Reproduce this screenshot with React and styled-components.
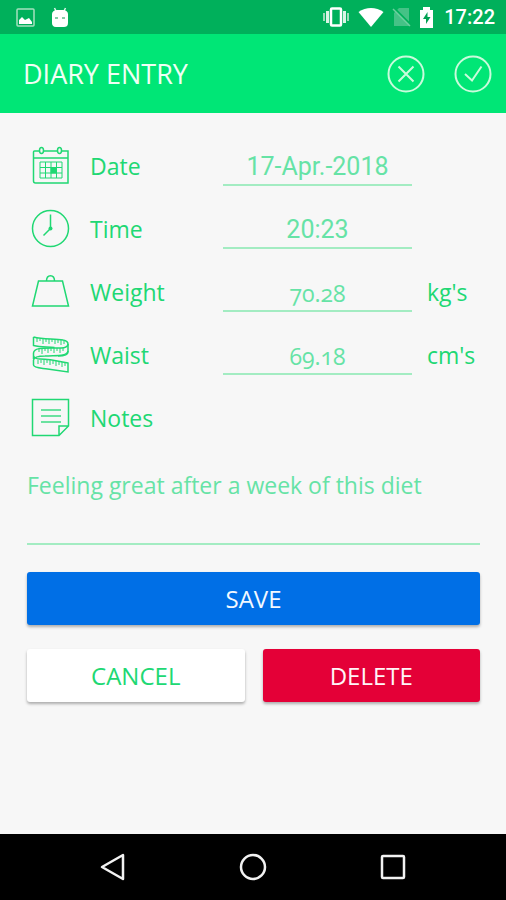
import React from "react";
import styled, { createGlobalStyle } from "styled-components";

const GREEN = "#20d873";
const SOFT_GREEN = "#66e3a6";
const LINE_GREEN = "#a3ecc2";

const GlobalStyle = createGlobalStyle`
  *, *::before, *::after { box-sizing: border-box; }
  body { margin: 0; background: #f7f7f7; }
  button, input, textarea { font: inherit; }
`;

const Screen = styled.div`
  min-height: 100vh;
  display: flex;
  flex-direction: column;
  background: #f7f7f7;
  color: ${GREEN};
  font-family: "Open Sans", "Noto Sans", sans-serif;
  font-size: 23px;
  line-height: 30px;
`;

const StatusBar = styled.div`
  height: 34px;
  padding: 0 11px 0 16px;
  display: flex;
  align-items: center;
  justify-content: space-between;
  background: #00b05b;
  color: #fff;
`;

const StatusGroup = styled.div`
  display: flex;
  align-items: center;
  gap: ${(p) => p.$gap}px;
`;

const Clock = styled.time`
  font-family: Roboto, sans-serif;
  font-size: 20px;
  font-weight: 500;
  line-height: 24px;
`;

const AppBar = styled.header`
  height: 79px;
  padding: 0 14px 0 23px;
  display: flex;
  align-items: center;
  justify-content: space-between;
  background: #00e676;
  color: #f0fff5;
`;

const Title = styled.h1`
  margin: 0;
  font-size: 27px;
  font-weight: 400;
  line-height: 36px;
`;

const Actions = styled.div`
  display: flex;
  gap: 29px;
`;

const IconButton = styled.button`
  display: flex;
  padding: 0;
  border: 0;
  background: none;
  color: #c9fbdc;
  cursor: pointer;
`;

const Form = styled.form`
  flex: 1;
  display: flex;
  flex-direction: column;
  padding: 21px 26px 24px 27px;
`;

const Row = styled.div`
  height: 63px;
  display: grid;
  grid-template-columns: 48px 118px minmax(0, 1fr) 53px;
  column-gap: 15px;
  align-items: center;
`;

const RowIcon = styled.span`
  display: flex;
  padding-left: 4px;
`;

const Label = styled.label`
  white-space: nowrap;
`;

const Field = styled.input`
  width: 100%;
  height: 41px;
  padding: 4px 0 0;
  border: 0;
  border-bottom: 2px solid ${LINE_GREEN};
  border-radius: 0;
  outline: 0;
  background: none;
  color: ${SOFT_GREEN};
  text-align: center;
  font-family: ${(p) => (p.$oldStyle ? '"Open Sans", sans-serif' : "Roboto, sans-serif")};
  font-size: ${(p) => (p.$oldStyle ? 23 : 25)}px;
  font-variant-numeric: ${(p) => (p.$oldStyle ? "oldstyle-nums" : "normal")};
`;

const Unit = styled.span`
  white-space: nowrap;
`;

const NotesField = styled.textarea`
  display: block;
  width: 100%;
  height: 96px;
  margin-bottom: 27px;
  padding: 21px 0 0;
  border: 0;
  border-bottom: 2px solid ${LINE_GREEN};
  border-radius: 0;
  outline: 0;
  resize: none;
  overflow: hidden;
  background: none;
  color: ${SOFT_GREEN};
`;

const ButtonRow = styled.div`
  display: flex;
  gap: 18px;
  margin-top: 24px;
`;

const Button = styled.button`
  flex: ${(p) => (p.$wide ? "none" : "1 1 0")};
  height: 53px;
  padding: 0;
  border: 0;
  border-radius: 3px;
  background: ${(p) => p.$fill};
  color: ${(p) => p.$ink};
  font-size: 24px;
  box-shadow: 0 2px 3px rgba(0, 0, 0, 0.3);
  cursor: pointer;
`;

const NavBar = styled.nav`
  height: 66px;
  display: flex;
  justify-content: center;
  align-items: center;
  gap: 112px;
  background: #000;
`;

const NavButton = styled(IconButton)`
  color: #f2f2f2;
`;

const Svg = ({ w, h = w, children, stroke = 1.5 }) => (
  <svg width={w} height={h} viewBox={`0 0 ${w} ${h}`} fill="none" stroke="currentColor"
    strokeWidth={stroke} aria-hidden="true">
    {children}
  </svg>
);

const PictureIcon = () => (
  <Svg w={19}>
    <rect x="1" y="1" width="17" height="17" rx="1" stroke="#a5dfbf" />
    <path d="M3 16v-4l3-3 3 3 2-1 2-1 3 4v2z" fill="#fff" stroke="none" />
  </Svg>
);

const RobotIcon = () => (
  <Svg w={18} h={21}>
    <path d="M5 4 3.500 1M13 4l1.500-3" stroke="#e0f6ea" />
    <path d="M1 7c0-2 2-4 5-4h6c3 0 5 2 5 4v9c0 3-2 4-4 4H5c-3 0-4-2-4-4z" fill="#fff" stroke="none" />
    <path d="M4 11h3M11 11h3" stroke="#5bbd88" />
  </Svg>
);

const VibrateIcon = () => (
  <Svg w={28} h={20} stroke={2}>
    <rect x="9" y="1.500" width="10" height="17" rx="1" stroke="#fff" strokeWidth="2.500" />
    <path d="M5.500 4v12M22.500 4v12" stroke="#d9f4e5" strokeWidth="3" />
    <path d="M2 6v8M26 6v8" stroke="#9edcba" />
  </Svg>
);

const WifiIcon = () => (
  <Svg w={26} h={20}>
    <path d="M.5 5C8-.5 18-.5 25.500 5L13 20z" fill="#fff" stroke="none" />
  </Svg>
);

const NoSimIcon = () => (
  <Svg w={19} h={20}>
    <path d="M7 1h10v18H2V6z" fill="#45c286" stroke="none" />
    <path d="M2 1l17 17" stroke="#00b05b" strokeWidth="2" />
    <path d="M1 2l17 17" stroke="#6fd0a0" />
  </Svg>
);

const BatteryIcon = () => (
  <Svg w={15} h={21}>
    <path d="M1 3h3V0h7v3h3v18H1z" fill="#fff" stroke="none" />
    <path d="M8.500 5 4 12h3v5l4.500-7h-3z" fill="#00a052" stroke="none" />
  </Svg>
);

const CloseIcon = () => (
  <Svg w={38} stroke={2}>
    <circle cx="19" cy="19" r="17.500" />
    <path d="m11.500 11.500 15 15m0-15-15 15" />
  </Svg>
);

const CheckIcon = () => (
  <Svg w={38} stroke={2}>
    <circle cx="19" cy="19" r="17.500" />
    <path d="m11 19 7 6.500 9.500-14" />
  </Svg>
);

const CalendarIcon = () => (
  <Svg w={39}>
    <path d="M8 5H3.500Q2.500 5 2.500 6v29q0 2 2 2H37V5h-6M12 5h14M2.500 12H37" />
    <ellipse cx="10.500" cy="4.500" rx="2" ry="3" />
    <ellipse cx="28.500" cy="4.500" rx="2" ry="3" />
    <path d="M9 16h22v16H9zM14.500 16v16M20 16v16M25.500 16v16M9 21.500h22M9 27h22" strokeWidth="1" />
    <path d="M19.500 21.500H26v6h-6.500z" fill="currentColor" stroke="none" />
  </Svg>
);

const ClockIcon = () => (
  <Svg w={39}>
    <circle cx="19.500" cy="19.500" r="18" />
    <path d="M19.500 5.500v14l-7 7" />
    <circle cx="19.500" cy="19.500" r="2" fill="currentColor" stroke="none" />
  </Svg>
);

const WeightIcon = () => (
  <Svg w={39}>
    <path d="M7.500 9h24L37.500 34h-36z" />
    <path d="M15.500 9c0-7 8-7 8 0" />
  </Svg>
);

const TapeIcon = () => (
  <Svg w={39}>
    <path d="M2.500 2C13 5 24 3 32 5q5 1 5 4v8c0 4-6 4-10 4" />
    <path d="M2.500 2v8.500c8 2 14 1 21 2" />
    <path d="M37 9c0 5-9 4-17 4-9 0-17 0-17.500 5v6" />
    <path d="M37 16c-1 6-14 4-23 5-6 0-11 1-11.500 4v5c0 3 8 3 14 4l20.500 3v-9C27 26 18 24 9 24q-5 0-6.500-3" />
    <path d="M6 3v4M9 4v2M12 4v5M15 4v3M18 4v5M21 4v3M24 4v5M27 5v3M30 5v5M33 6v3M8 14v3M11 14v5M14 13v3M17 13v5M20 13v3M23 13v5M26 13v3M29 13v5M32 13v3M7 25v4M10 25v3M13 25v5M16 25v3M19 25v5M22 26v3M25 26v5M28 27v3M31 27v5M34 28v3" strokeWidth="1" />
  </Svg>
);

const NoteIcon = () => (
  <Svg w={39}>
    <path d="M1.500 1.500h36V28L28 37.500H1.500zM28 37.500V28h9.500" />
    <path d="M10 12h20M10 18h20M10 24h20" stroke="#6be2a0" strokeWidth="2" />
  </Svg>
);

const BackIcon = () => (
  <Svg w={28} stroke={2.5}>
    <path d="M24 2v24L3 14z" strokeLinejoin="round" />
  </Svg>
);

const HomeIcon = () => (
  <Svg w={28} stroke={2.5}>
    <circle cx="14" cy="14" r="12" />
  </Svg>
);

const RecentIcon = () => (
  <Svg w={28} stroke={2.5}>
    <rect x="3" y="3" width="22" height="22" rx="1" />
  </Svg>
);

const FIELDS = [
  { id: "date", label: "Date", value: "17-Apr.-2018", Icon: CalendarIcon },
  { id: "time", label: "Time", value: "20:23", Icon: ClockIcon },
  { id: "weight", label: "Weight", value: "70.28", unit: "kg's", Icon: WeightIcon },
  { id: "waist", label: "Waist", value: "69.18", unit: "cm's", Icon: TapeIcon },
];

export default function App() {
  return (
    <Screen>
      <GlobalStyle />
      <StatusBar>
        <StatusGroup $gap={16}>
          <PictureIcon />
          <RobotIcon />
        </StatusGroup>
        <StatusGroup $gap={8}>
          <VibrateIcon />
          <WifiIcon />
          <NoSimIcon />
          <StatusGroup $gap={10}>
            <BatteryIcon />
            <Clock>17:22</Clock>
          </StatusGroup>
        </StatusGroup>
      </StatusBar>
      <AppBar>
        <Title>DIARY ENTRY</Title>
        <Actions>
          <IconButton type="button" aria-label="Discard"><CloseIcon /></IconButton>
          <IconButton type="button" aria-label="Confirm"><CheckIcon /></IconButton>
        </Actions>
      </AppBar>
      <Form onSubmit={(e) => e.preventDefault()}>
        {FIELDS.map(({ id, label, value, unit, Icon }) => (
          <Row key={id}>
            <RowIcon><Icon /></RowIcon>
            <Label htmlFor={id}>{label}</Label>
            <Field id={id} type="text" defaultValue={value} $oldStyle={Boolean(unit)} />
            {unit && <Unit>{unit}</Unit>}
          </Row>
        ))}
        <Row>
          <RowIcon><NoteIcon /></RowIcon>
          <Label htmlFor="notes">Notes</Label>
        </Row>
        <NotesField id="notes" defaultValue="Feeling great after a week of this diet" />
        <Button type="submit" $wide $fill="#006fe6" $ink="#f2f8ff">SAVE</Button>
        <ButtonRow>
          <Button type="button" $fill="#ffffff" $ink={GREEN}>CANCEL</Button>
          <Button type="button" $fill="#e40037" $ink="#fff5f7">DELETE</Button>
        </ButtonRow>
      </Form>
      <NavBar>
        <NavButton type="button" aria-label="Back"><BackIcon /></NavButton>
        <NavButton type="button" aria-label="Home"><HomeIcon /></NavButton>
        <NavButton type="button" aria-label="Recent apps"><RecentIcon /></NavButton>
      </NavBar>
    </Screen>
  );
}
